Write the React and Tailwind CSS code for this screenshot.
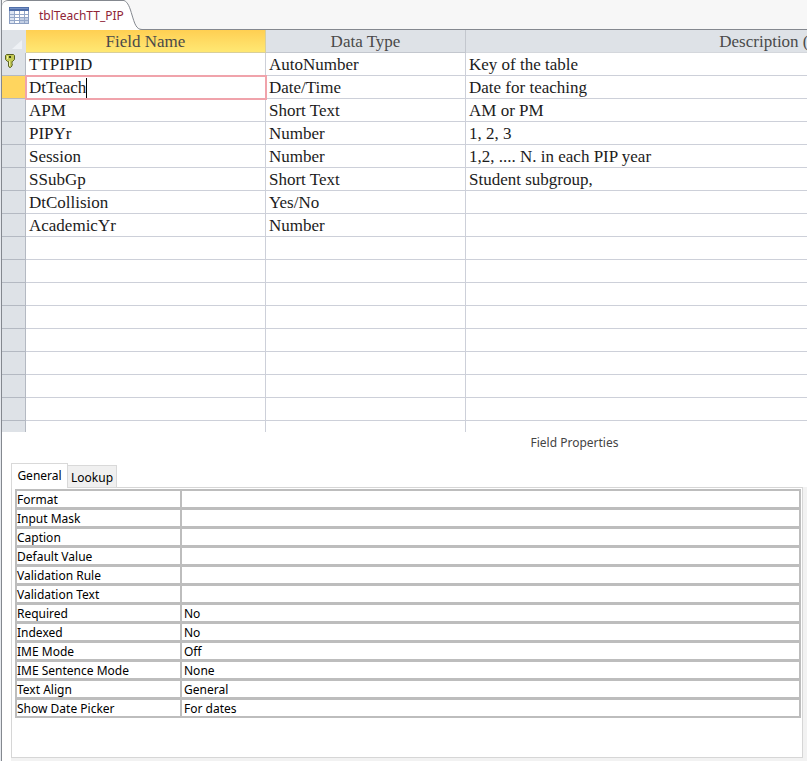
import React, { useState } from 'react';

const fields = [
  { name: 'TTPIPID', type: 'AutoNumber', description: 'Key of the table', isKey: true },
  { name: 'DtTeach', type: 'Date/Time', description: 'Date for teaching' },
  { name: 'APM', type: 'Short Text', description: 'AM or PM' },
  { name: 'PIPYr', type: 'Number', description: '1, 2, 3' },
  { name: 'Session', type: 'Number', description: '1,2, .... N. in each PIP year' },
  { name: 'SSubGp', type: 'Short Text', description: 'Student subgroup,' },
  { name: 'DtCollision', type: 'Yes/No', description: '' },
  { name: 'AcademicYr', type: 'Number', description: '' },
];

// the grid always keeps a few blank rows under the last field
const emptyRows = Array.from({ length: 9 }, () => ({ name: '', type: '', description: '' }));
const rows = [...fields, ...emptyRows];

const properties = [
  { id: 'format', label: 'Format', value: '' },
  { id: 'input-mask', label: 'Input Mask', value: '' },
  { id: 'caption', label: 'Caption', value: '' },
  { id: 'default-value', label: 'Default Value', value: '' },
  { id: 'validation-rule', label: 'Validation Rule', value: '' },
  { id: 'validation-text', label: 'Validation Text', value: '' },
  { id: 'required', label: 'Required', value: 'No' },
  { id: 'indexed', label: 'Indexed', value: 'No' },
  { id: 'ime-mode', label: 'IME Mode', value: 'Off' },
  { id: 'ime-sentence-mode', label: 'IME Sentence Mode', value: 'None' },
  { id: 'text-align', label: 'Text Align', value: 'General' },
  { id: 'show-date-picker', label: 'Show Date Picker', value: 'For dates' },
];

function TableIcon() {
  return (
    <svg width="20" height="17" viewBox="0 0 20 17" className="shrink-0" aria-hidden="true">
      <rect x="0.5" y="0.5" width="19" height="16" fill="#fff" stroke="#8c9fc2" />
      <rect x="0" y="0" width="20" height="4" fill="#4f6ea9" />
      <path d="M1 1.5h18" stroke="#7893c6" />
      <rect x="1" y="4" width="4" height="12" fill="#dbe4f2" />
      <rect x="11" y="10" width="8" height="6" fill="#c3cfe4" />
      <path d="M1 7.5h18M1 10.5h18M1 13.5h18M5.5 4v12M10.5 4v12M15.5 4v12" stroke="#94a7c8" />
    </svg>
  );
}

function KeyIcon() {
  return (
    <svg width="10" height="14" viewBox="0 0 10 14" className="block" aria-hidden="true">
      <path
        d="M1.5 0.5h7l1 1v4l-2 2H7v2l.5.5-.5 1v1L5.500 13.5H4.500L3.500 12V7.500H2.500l-2-2v-4z"
        fill="#c3c955"
        stroke="#596123"
      />
      <path d="M4 2h2v2H4z" fill="#3d4718" />
      <path d="M2.5 2v3M4.5 7v5" stroke="#eef0a6" />
    </svg>
  );
}

function DocumentTab({ title }) {
  return (
    <div className="flex h-[30px] items-end border-b border-[#84888f] bg-[#f7f7f7]">
      <div className="-mb-px flex h-[30px]">
        <button className="flex items-center gap-2.5 rounded-tl-md border-t border-[#84888f] bg-white pl-[7px] text-xs text-[#8f2436]">
          <TableIcon />
          {title}
        </button>
        <svg width="18" height="30" viewBox="0 0 18 30" className="block" aria-hidden="true">
          <path d="M0 0.5C4 2 6 8 8 15C10.500 23 12 29.500 18 29.500V30H0z" fill="#fff" />
          <path d="M0 0.5C4 2 6 8 8 15C10.500 23 12 29.500 18 29.500" fill="none" stroke="#84888f" />
        </svg>
      </div>
    </div>
  );
}

function FieldRow({ field, selected }) {
  const cell = 'border-r border-b border-[#cdd0d9] px-[3px] pt-0.5 pb-0 whitespace-nowrap';
  return (
    <tr className="h-[23px]">
      <td
        className={`border-r border-b border-[#b4b9c2] p-0 align-top ${selected ? 'bg-[#ffd55e]' : 'bg-[#dee2e7]'}`}
      >
        {field.isKey && (
          <div className="pt-px pl-[3px]">
            <KeyIcon />
          </div>
        )}
      </td>
      <td className={selected ? `${cell} outline-2 -outline-offset-1 outline-[#f0a3ab]` : cell}>
        {selected ? (
          <div className="flex h-[20px] items-center">
            <input
              aria-label="Field Name"
              defaultValue={field.name}
              className="field-sizing-content h-[20px] outline-none"
            />
            <span className="h-[20px] w-px bg-black" />
          </div>
        ) : (
          field.name
        )}
      </td>
      <td className={cell}>{field.type}</td>
      <td className={cell}>{field.description}</td>
    </tr>
  );
}

function FieldGrid() {
  return (
    <div className="h-[402px] overflow-hidden">
      <table className="w-[1125px] table-fixed border-separate border-spacing-0 font-['Liberation_Serif','Noto_Sans_CJK_TC',serif] text-[17px] leading-[20px] text-[#1c1c1c]">
        <colgroup>
          <col className="w-[24px]" />
          <col className="w-[240px]" />
          <col className="w-[200px]" />
          <col />
        </colgroup>
        <thead>
          <tr className="h-[23px] text-[#4a4a4a]">
            <td className="bg-[#dee2e7] p-0 align-bottom">
              <svg width="22" height="14" viewBox="0 0 22 14" className="block" aria-hidden="true">
                <path d="M20 1v9H10z" fill="#eef1f5" />
              </svg>
            </td>
            <th className="border-r border-b border-[#d9cf9a] bg-linear-to-b from-[#ffcf52] to-[#ffe873] px-0 pt-0.5 pb-0 font-normal">
              Field Name
            </th>
            <th className="border-r border-b border-[#c3c7ce] bg-[#dee2e7] px-0 pt-0.5 pb-0 font-normal">
              Data Type
            </th>
            <th className="border-b border-[#d4d7dc] bg-[#dee2e7] px-0 pt-0.5 pb-0 font-normal">
              Description (Optional)
            </th>
          </tr>
        </thead>
        <tbody>
          {rows.map((field, i) => (
            <FieldRow key={i} field={field} selected={field.name === 'DtTeach'} />
          ))}
        </tbody>
      </table>
    </div>
  );
}

function PropertySheet() {
  return (
    <div className="divide-y-3 divide-[#bdbdbd] border-2 border-[#bdbdbd]">
      {properties.map((prop) => (
        <div key={prop.id} className="box-content flex h-[16px]">
          <label
            htmlFor={prop.id}
            className="w-[165px] shrink-0 border-r-2 border-[#bdbdbd] leading-[18px] whitespace-nowrap"
          >
            {prop.label}
          </label>
          <input
            id={prop.id}
            defaultValue={prop.value}
            className="h-[18px] min-w-0 flex-1 px-0.5 leading-[18px] outline-none"
          />
        </div>
      ))}
    </div>
  );
}

export default function App() {
  const [activeTab, setActiveTab] = useState('General');

  return (
    <div className="flex min-h-screen flex-col bg-[#e6e9ee] pl-px font-['Noto_Sans','Open_Sans',sans-serif]">
      <div className="flex flex-1 flex-col border-l border-[#84888f] bg-white">
        <DocumentTab title="tblTeachTT_PIP" />
        <FieldGrid />

        <h2 className="pt-0.5 pl-[340px] text-center text-xs leading-[18px] text-[#444]">Field Properties</h2>

        <div className="mt-[11px] flex flex-1 flex-col pl-[9px] text-xs text-black">
          <div role="tablist" className="z-10 -mb-px flex items-end">
            {['General', 'Lookup'].map((tab) => (
              <button
                key={tab}
                role="tab"
                aria-selected={activeTab === tab}
                onClick={() => setActiveTab(tab)}
                className={
                  activeTab === tab
                    ? 'h-[25px] min-w-[57px] border border-b-0 border-[#d9d9d9] bg-white px-[5px]'
                    : 'h-[23px] border border-l-0 border-[#d9d9d9] bg-[#f0f0f0] px-[3px] pt-0.5'
                }
              >
                {tab}
              </button>
            ))}
          </div>
          <div className="flex flex-1 flex-col bg-[#f2f2f2] pr-1 pb-[3px]">
            <div className="min-h-[271px] flex-1 border border-[#d6d6d6] bg-white pt-px pr-px pl-[3px]">
              {activeTab === 'General' && <PropertySheet />}
            </div>
          </div>
        </div>
      </div>
    </div>
  );
}
